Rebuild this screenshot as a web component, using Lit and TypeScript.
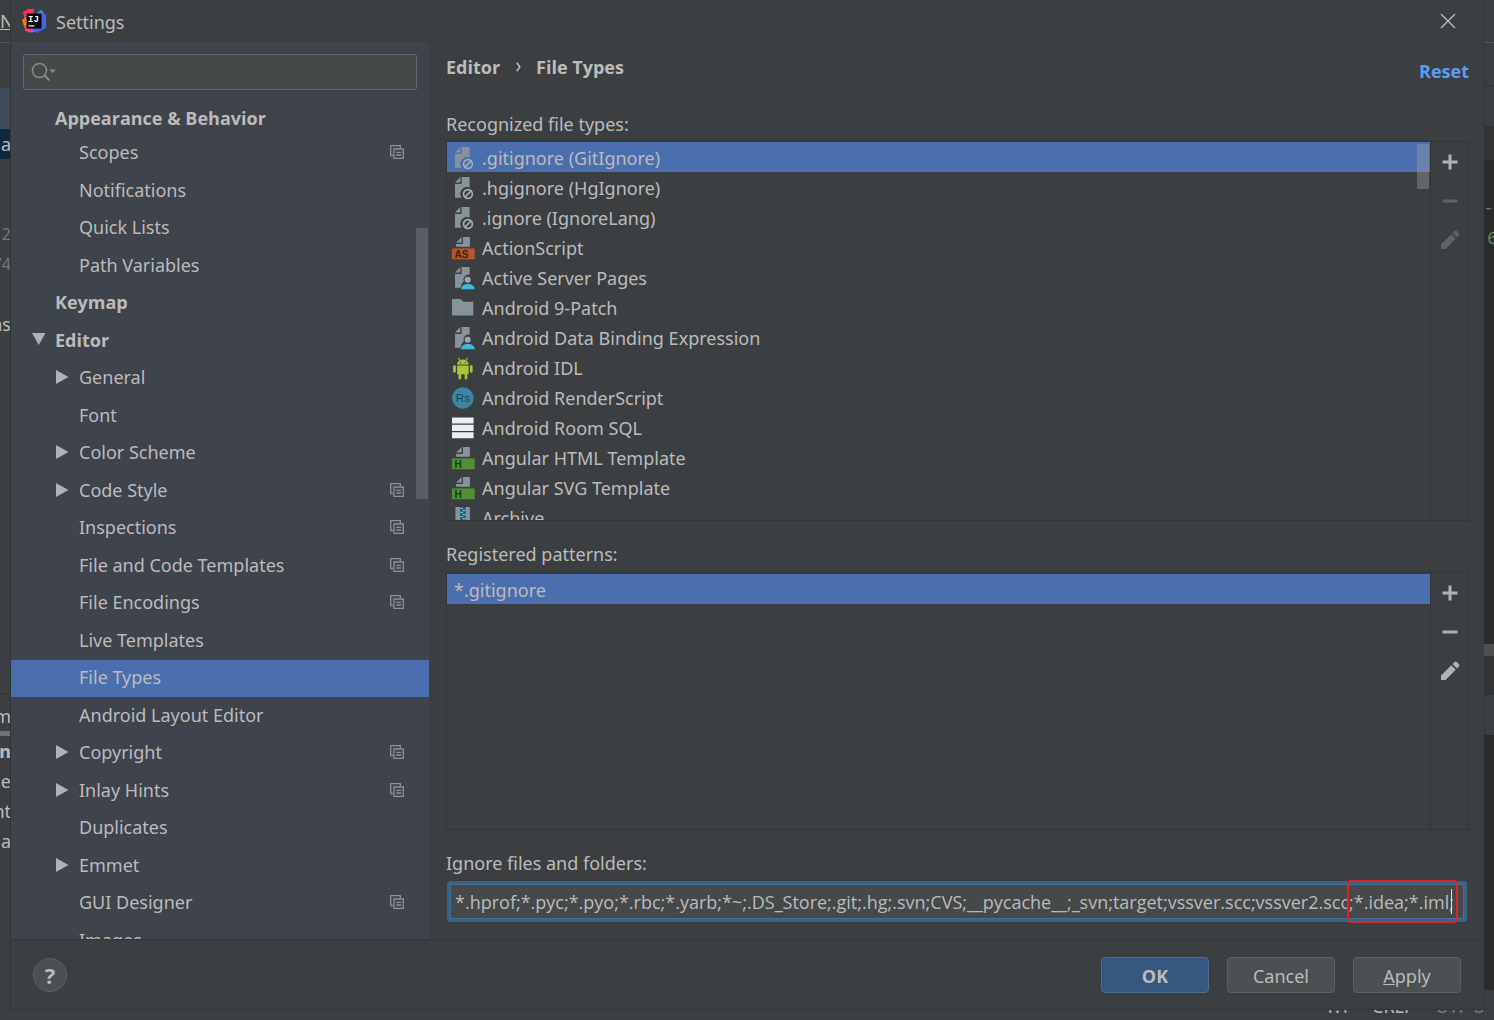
import { LitElement, html, svg, css, nothing } from "lit";
import { customElement, property } from "lit/decorators.js";
import { classMap } from "lit/directives/class-map.js";

type IconName = "ignored" | "as" | "user" | "folder" | "android" | "rs" | "sql" | "html" | "archive";

interface TreeRow {
  label: string;
  level: 0 | 1;
  arrow?: "open" | "closed";
  project?: boolean;
  selected?: boolean;
}

const TREE: TreeRow[] = [
  { label: "Scopes", level: 1, project: true },
  { label: "Notifications", level: 1 },
  { label: "Quick Lists", level: 1 },
  { label: "Path Variables", level: 1 },
  { label: "Keymap", level: 0 },
  { label: "Editor", level: 0, arrow: "open" },
  { label: "General", level: 1, arrow: "closed" },
  { label: "Font", level: 1 },
  { label: "Color Scheme", level: 1, arrow: "closed" },
  { label: "Code Style", level: 1, arrow: "closed", project: true },
  { label: "Inspections", level: 1, project: true },
  { label: "File and Code Templates", level: 1, project: true },
  { label: "File Encodings", level: 1, project: true },
  { label: "Live Templates", level: 1 },
  { label: "File Types", level: 1, selected: true },
  { label: "Android Layout Editor", level: 1 },
  { label: "Copyright", level: 1, arrow: "closed", project: true },
  { label: "Inlay Hints", level: 1, arrow: "closed", project: true },
  { label: "Duplicates", level: 1 },
  { label: "Emmet", level: 1, arrow: "closed" },
  { label: "GUI Designer", level: 1, project: true },
  { label: "Images", level: 1 },
];

const FILE_TYPES: { label: string; icon: IconName }[] = [
  { label: ".gitignore (GitIgnore)", icon: "ignored" },
  { label: ".hgignore (HgIgnore)", icon: "ignored" },
  { label: ".ignore (IgnoreLang)", icon: "ignored" },
  { label: "ActionScript", icon: "as" },
  { label: "Active Server Pages", icon: "user" },
  { label: "Android 9-Patch", icon: "folder" },
  { label: "Android Data Binding Expression", icon: "user" },
  { label: "Android IDL", icon: "android" },
  { label: "Android RenderScript", icon: "rs" },
  { label: "Android Room SQL", icon: "sql" },
  { label: "Angular HTML Template", icon: "html" },
  { label: "Angular SVG Template", icon: "html" },
  { label: "Archive", icon: "archive" },
];

const IGNORED =
  "*.hprof;*.pyc;*.pyo;*.rbc;*.yarb;*~;.DS_Store;.git;.hg;.svn;CVS;__pycache__;_svn;target;vssver.scc;vssver2.scc;*.idea;*.iml;";

const halfPage = svg`<path fill="#87939a" d="M7 0 3 4h4zM8 0v5H3v2h10V0z"/>`;

const badge = (fill: string, ink: string, text: string) => svg`
  ${halfPage}
  <rect y="8.300" width="16.500" height="7.900" fill=${fill}/>
  <text x="1.800" y="15.100" font-family="Liberation Sans" font-weight="700" font-size="7.400" fill=${ink}>${text}</text>`;

const ICONS: Record<IconName, unknown> = {
  ignored: svg`
    <path fill="#87939a" d="M6 0 2.200 4H6zM7 0v5H2.200v10H7a4.900 4.900 0 0 1 5.800-7.400V0z"/>
    <circle cx="11.600" cy="12.400" r="3.200" fill="none" stroke="#a5b0b7" stroke-width="1.200"/>
    <path d="m9.400 14.600 4.400-4.400" stroke="#a5b0b7" stroke-width="1.200"/>`,
  as: badge("#b5562b", "#43210f", "AS"),
  user: svg`
    <path fill="#87939a" d="M6 0 2.200 4H6zM7 0v5H2.200v10h4c.3-1.700 1.200-3.900 2.500-4.600A3.400 3.400 0 0 1 12.800 5.700V0z"/>
    <circle cx="11.400" cy="9.200" r="2.200" fill="#9aa7b0"/>
    <path fill="#40b6e0" d="M6.600 16.200c.1-2.400 1.800-3.800 4.900-3.800s4.900 1.400 5 3.800z"/>`,
  folder: svg`<path fill="#87939a" d="M0 1.500h6.200l2 2H15.500v10H0z"/>`,
  android: svg`
    <g fill="#a4c639">
      <path d="M3.700 5.500a4.200 3.600 0 0 1 8.400 0z"/>
      <path d="M3.700 6.200h8.400V12.500h-1v3a.9.900 0 0 1-1.900 0v-3H6.700v3a.9.900 0 0 1-1.900 0v-3H3.700z"/>
      <rect x=".8" y="6" width="2" height="5.400" rx="1"/>
      <rect x="13" y="6" width="2" height="5.400" rx="1"/>
    </g>
    <path d="m4.500.5 1.300 2M11.300.5l-1.300 2" stroke="#a4c639" stroke-width=".8"/>
    <circle cx="6.200" cy="3.900" r=".5" fill="#3c3f41"/><circle cx="9.700" cy="3.900" r=".5" fill="#3c3f41"/>`,
  rs: svg`
    <circle cx="7.900" cy="8" r="7.800" fill="#3b86a3"/>
    <text x="7.900" y="10.900" text-anchor="middle" font-family="Liberation Sans" font-size="8.400" fill="#1b4456">Rs</text>`,
  sql: svg`<path fill="#eceff0" d="M0 .3h15.700v4.400H0zM0 5.700h15.700v4.400H0zM0 11.100h15.700v4.400H0z"/>`,
  html: badge("#4f8f35", "#1c3a10", "H"),
  archive: svg`
    <path fill="#87939a" d="M2.500 0h10.500v14H2.500z"/>
    <path fill="#2f4a56" d="M6 0h3.800v14H6z"/>
    <path stroke="#5fc3dc" stroke-width="1" d="M6.200 1h2M7.600 2.500h2M6.200 4h2M7.600 5.500h2M6.200 7h2M7.600 8.500h2"/>`,
};

@customElement("file-icon")
class FileIcon extends LitElement {
  static styles = css`
    :host { display: block; width: 22px; height: 22px; }
    svg { display: block; overflow: visible; }
  `;
  @property() name: IconName = "folder";
  render() {
    return html`<svg width="22" height="22" viewBox="0 0 16 16" aria-hidden="true">${ICONS[this.name]}</svg>`;
  }
}

@customElement("edit-toolbar")
class EditToolbar extends LitElement {
  static styles = css`
    :host { display: flex; flex-direction: column; }
    button { width: 38px; height: 39px; padding: 0; border: 0; background: none; color: #afb1b3; display: grid; place-items: center; }
    button:disabled { color: #606365; }
    svg { display: block; }
  `;
  @property({ type: Boolean }) readonly = false;
  render() {
    return html`
      <button aria-label="Add">
        <svg width="22" height="22" viewBox="0 0 22 22" fill="currentColor"><path d="M9.500 3.500h3v6h6v3h-6v6h-3v-6h-6v-3h6z"/></svg>
      </button>
      <button aria-label="Remove" ?disabled=${this.readonly}>
        <svg width="22" height="22" viewBox="0 0 22 22" fill="currentColor"><path d="M3.500 9.500h15v3h-15z"/></svg>
      </button>
      <button aria-label="Edit" ?disabled=${this.readonly}>
        <svg width="22" height="22" viewBox="0 0 22 22" fill="currentColor"><path d="M12.300 5.200 16.800 9.700 6.500 20H2v-4.500zM13.500 4l1.800-1.800a2 2 0 0 1 2.800 0l1.700 1.700a2 2 0 0 1 0 2.800L18 8.500z"/></svg>
      </button>`;
  }
}

@customElement("settings-tree")
class SettingsTree extends LitElement {
  static styles = css`
    :host { display: flex; flex-direction: column; min-height: 0; background: #3f434b; position: relative; overflow: hidden; }
    .search { display: flex; align-items: center; margin: 12px 12px 10px; height: 36px; box-sizing: border-box; border: 1px solid #646668; border-radius: 2px; background: #45494a; padding-left: 7px; flex: none; }
    .search input { flex: 1; min-width: 0; border: 0; outline: 0; background: none; color: #bbb; font: inherit; }
    .group { flex: none; height: 35px; line-height: 37px; padding-left: 44px; font-family: "Open Sans", sans-serif; font-weight: 700; }
    .rows { flex: 1; min-height: 0; overflow: hidden; }
    .row { display: flex; align-items: center; height: 37px; box-sizing: border-box; padding: 0 25px 3px 21px; }
    .row:nth-child(even) { height: 38px; }
    .row.child { padding-left: 45px; }
    .row.top { font-family: "Open Sans", sans-serif; font-weight: 700; }
    .row.selected { background: #4b6eaf; }
    .arrow { width: 23px; flex: none; }
    .name { flex: 1; white-space: nowrap; }
    svg { display: block; }
    .thumb { position: absolute; right: 1px; top: 186px; width: 12px; height: 271px; background: #5a5d66; }
  `;
  render() {
    return html`
      <label class="search">
        <svg width="27" height="22" viewBox="0 0 27 22" fill="none" stroke="#87898b" stroke-width="1.600" aria-hidden="true">
          <circle cx="8.500" cy="9.500" r="7"/><path d="m13.500 14.500 4.800 4.800" stroke-width="2.200"/><path d="M18 8.500h7l-3.500 3.500z" fill="#87898b" stroke="none"/>
        </svg>
        <input type="text" aria-label="Search settings" />
      </label>
      <div class="group">Appearance &amp; Behavior</div>
      <div class="rows" role="tree" aria-label="Settings">
        ${TREE.map((r) => html`
          <div role="treeitem" aria-selected=${r.selected ? "true" : "false"}
            class=${classMap({ row: true, child: r.level === 1, top: r.level === 0, selected: !!r.selected })}>
            <span class="arrow">
              ${r.arrow === "open"
                ? html`<svg width="14" height="14" viewBox="0 0 14 14"><path d="M0 0h13.500L6.750 12z" fill="#afb1b3"/></svg>`
                : r.arrow === "closed"
                ? html`<svg width="14" height="14" viewBox="0 0 14 14"><path d="M0 0v14l12.500-7z" fill="#afb1b3"/></svg>`
                : nothing}
            </span>
            <span class="name">${r.label}</span>
            ${r.project
              ? html`<svg width="14" height="14" viewBox="0 0 14 14" fill="none" stroke="#8d9196" stroke-width="1.300" aria-hidden="true">
                  <path d="M3 10.500H.7V.7h9.600V3M4 4h9.300v9.300H4zM6.200 7.300h5M6.200 10h5"/>
                </svg>`
              : nothing}
          </div>`)}
      </div>
      <span class="thumb"></span>`;
  }
}

@customElement("app-root")
class AppRoot extends LitElement {
  static styles = css`
    :host { display: grid; grid-template: minmax(0, 1fr) 10px / 11px minmax(0, 1fr) 10px; height: 100vh; background: #3c3f41; color: #bbb; font: 18px/24px "Noto Sans", "Open Sans", sans-serif; overflow: hidden; }
    .edge { grid-row: 1 / 3; overflow: hidden; display: flex; flex-direction: column; }
    .edge div { flex: none; box-sizing: border-box; height: 30px; line-height: 30px; display: flex; justify-content: flex-end; overflow: hidden; white-space: nowrap; }
    .edge .h42 { height: 43px; line-height: 43px; border-bottom: 1px solid #55585a; }
    .edge .start { justify-content: flex-start; text-decoration: underline; }
    .edge .h45 { height: 45px; }
    .edge .blue { height: 41px; background: #3d4b5b; }
    .edge .navy { background: #0d293e; }
    .edge .h60 { height: 60px; }
    .edge .dim { color: #77797b; font-size: 16px; }
    .edge .h355 { height: 355px; border-bottom: 1px solid #323232; }
    .edge .h7 { height: 7px; }
    .edge .bar { height: 5px; background: #6f7375; }
    .edge .bold { font-weight: 700; }
    .edge .h43 { height: 43px; border-bottom: 1px solid #323232; }
    .edge .gutter { height: 34px; background: #313335; }
    .edge .code { background: #2b2b2b; color: #6a8759; font-family: "Liberation Mono", monospace; }
    .edge .gap { height: 34px; }
    .edge .number { justify-content: flex-start; padding-left: 3px; }
    .edge .h391 { height: 390px; }
    .edge .scroll { height: 12px; background: #4d4f50; }
    .edge .h39 { height: 39px; background: #313335; }
    .edge .h40 { height: 40px; }
    .edge .h255 { height: 255px; }
    .status { grid-area: 2 / 2; display: flex; justify-content: flex-end; align-items: flex-end; gap: 22px; overflow: hidden; height: 10px; line-height: 24px; }
    .status span { height: 26px; }
    .status .off { color: #77797b; }

    .dialog { grid-area: 1 / 2; min-height: 0; display: grid; grid-template: 42px minmax(0, 1fr) 70px / 418px minmax(0, 1fr); border: solid #323537; border-width: 0 0 1px; box-sizing: border-box; box-shadow: -1px 0 #323537, 1px 0 #323537; }
    .title { grid-column: 1 / 3; display: flex; align-items: center; padding: 0 28px 0 11px; gap: 10px; }
    .title h1 { flex: 1; margin: 0; padding-top: 2px; font: inherit; }
    .icon-button { border: 0; padding: 0; background: none; display: block; }
    svg { display: block; }
    .main { min-height: 0; display: flex; flex-direction: column; padding: 0 15px 17px 17px; }
    .head { flex: none; height: 70px; box-sizing: border-box; padding-top: 13px; display: flex; justify-content: space-between; align-items: flex-start; font-family: "Open Sans", sans-serif; font-weight: 700; }
    .crumbs { display: flex; align-items: center; gap: 15px; }
    .head a { color: #589df6; text-decoration: none; margin-top: 4px; }
    .caption { flex: none; height: 29px; }
    .box + .caption { height: 30px; }
    .box { flex: 380 1 0; min-height: 0; display: grid; grid-template-columns: minmax(0, 1fr) 37px; border: 1px solid #323537; box-sizing: border-box; margin-bottom: 21px; position: relative; }
    .box.small { flex-grow: 257; }
    .list { margin: 0; padding: 0; list-style: none; overflow: hidden; border-right: 1px solid #323537; position: relative; }
    .list li { display: flex; align-items: center; gap: 8px; height: 30px; box-sizing: border-box; padding: 2px 0 0 5px; }
    .list .selected { background: #4b6eaf; }
    .small .list li { padding-left: 7px; margin-top: 1px; }
    .thumb { position: absolute; right: 1px; top: 2px; width: 12px; height: 45px; background: rgba(166, 166, 166, 0.36); }
    .field { flex: none; height: 41px; margin: 0 2px 0 1px; position: relative; }
    .field input { display: block; width: 100%; height: 41px; box-sizing: border-box; border: 4px solid #3d6185; outline: 1px solid #466d94; outline-offset: -4px; border-radius: 3px; background: #45494a; color: #bbb; font: 18px/24px "Open Sans", sans-serif; padding: 0 4px; }
    .caret { position: absolute; right: 15px; top: 8px; width: 1px; height: 25px; background: #ddd; }
    .mark { position: absolute; right: 9px; top: -1px; width: 111px; height: 43px; box-sizing: border-box; border: 2px solid #d9262b; border-radius: 4px; }
    .foot { grid-column: 1 / 3; border-top: 1px solid #323537; display: flex; align-items: flex-start; gap: 18px; padding: 17px 23px 0 22px; }
    .help { width: 34px; height: 34px; border-radius: 50%; border: 1px solid #5c6063; background: #4c5052; color: #bbb; font: 700 22px/30px "Open Sans", sans-serif; padding: 0; margin: 1px auto 0 0; }
    .btn { width: 108px; height: 36px; border: 1px solid #5e6163; border-radius: 4px; background: #4c5052; color: #bbb; font: inherit; padding: 2px 0 0; }
    .btn.primary { background: #365880; border-color: #4c708c; font-family: "Open Sans", sans-serif; font-weight: 700; }
  `;

  render() {
    return html`
      <div class="edge" aria-hidden="true">
        <div class="h42 start">N</div><div class="h45"></div><div class="blue"></div><div class="navy">a</div>
        <div class="h60"></div><div class="dim">2</div><div class="dim">74</div><div></div><div>ns</div>
        <div class="h355"></div><div class="h7"></div><div>m</div><div class="bar"></div>
        <div class="bold">n</div><div>ne</div><div>nt</div><div>a</div>
      </div>
      <section class="dialog" role="dialog" aria-label="Settings">
        <header class="title">
          <svg width="24" height="24" viewBox="0 0 24 24" aria-hidden="true">
            <path d="M1 3 6 0h6l-1 10-5 8-5-2 2-5z" fill="#fe315d"/>
            <path d="M0 11 4 8l3 8-4 3z" fill="#f97a12"/>
            <path d="M2 18h8l5 5-8 .5z" fill="#b74af7"/>
            <path d="M3 17h6v6l-6-1z" fill="#fc3e73"/>
            <path d="m15 4 4-3 5 5v13l-9 5-5-4z" fill="#4a62e8"/>
            <path d="m15 4 4-3 2 2-3 4z" fill="#4a8bd8"/>
            <path d="M4.500 4.500h15v15h-15z" fill="#050505"/>
            <text x="6" y="12.600" font-family="Liberation Mono" font-weight="700" font-size="9" fill="#fff">IJ</text>
            <path d="M6.500 16.300h6v1.200h-6z" fill="#fff"/>
          </svg>
          <h1>Settings</h1>
          <button class="icon-button" aria-label="Close">
            <svg width="16" height="16" viewBox="0 0 16 16" stroke="#bbb" stroke-width="1.400"><path d="m1 1 14 14M15 1 1 15"/></svg>
          </button>
        </header>
        <settings-tree></settings-tree>
        <main class="main">
          <div class="head">
            <div class="crumbs">
              <span>Editor</span>
              <svg width="6" height="10" viewBox="0 0 6 10" fill="none" stroke="#bbb" stroke-width="1.600"><path d="m1.800.8 3 4.200-3 4.200"/></svg>
              <span>File Types</span>
            </div>
            <a href="#reset">Reset</a>
          </div>
          <div class="caption" id="types">Recognized file types:</div>
          <div class="box">
            <ul class="list" role="listbox" aria-labelledby="types">
              ${FILE_TYPES.map((t, i) => html`
                <li role="option" aria-selected=${i === 0 ? "true" : "false"} class=${classMap({ selected: i === 0 })}>
                  <file-icon .name=${t.icon}></file-icon><span>${t.label}</span>
                </li>`)}
              <span class="thumb"></span>
            </ul>
            <edit-toolbar readonly></edit-toolbar>
          </div>
          <div class="caption" id="patterns">Registered patterns:</div>
          <div class="box small">
            <ul class="list" role="listbox" aria-labelledby="patterns">
              <li role="option" aria-selected="true" class="selected">*.gitignore</li>
            </ul>
            <edit-toolbar></edit-toolbar>
          </div>
          <label class="caption" for="ignored">Ignore files and folders:</label>
          <div class="field">
            <input id="ignored" type="text" .value=${IGNORED} />
            <span class="caret"></span>
            <span class="mark"></span>
          </div>
        </main>
        <footer class="foot">
          <button class="help" aria-label="Help">?</button>
          <button class="btn primary">OK</button>
          <button class="btn">Cancel</button>
          <button class="btn"><u>A</u>pply</button>
        </footer>
      </section>
      <div class="edge" aria-hidden="true">
        <div class="h42"></div><div class="h43"></div><div class="h40"></div><div class="gutter"></div>
        <div class="code gap"></div><div class="code">+-</div><div class="code number">6</div>
        <div class="code h391"></div><div class="scroll"></div><div class="h39"></div><div class="h40"></div>
        <div class="code h255"></div>
      </div>
      <div class="status" aria-hidden="true"><span>1:1</span><span>CRLF</span><span class="off">UTF-8</span></div>`;
  }
}
